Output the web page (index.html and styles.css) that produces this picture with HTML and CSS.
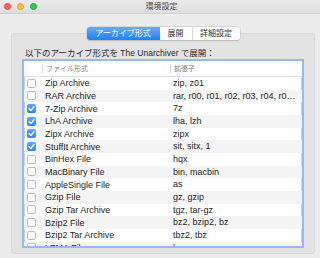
FILE: index.html
```html
<!DOCTYPE html>
<html lang="ja">
<head>
    <meta charset="UTF-8">
    <meta name="viewport" content="width=device-width, initial-scale=1.0">
    <title>環境設定</title>
    <link rel="stylesheet" href="styles.css">
</head>
<body>
    <div class="titlebar">
        <div class="lights">
            <span class="light red"></span>
            <span class="light yellow"></span>
            <span class="light green"></span>
        </div>
        <div class="title">環境設定</div>
    </div>

    <div class="content">
        <div class="tabs">
            <div class="tab tab-formats selected">アーカイブ形式</div>
            <div class="tab tab-extract">展開</div>
            <div class="tab tab-advanced">詳細設定</div>
        </div>

        <div class="group">
            <div class="label">以下のアーカイブ形式を The Unarchiver で展開：</div>

            <div class="table">
                <div class="row header">
                    <div class="cell"></div>
                    <div class="cell head">ファイル形式</div>
                    <div class="cell head">拡張子</div>
                </div>

                <div class="row">
                    <div class="cell"><span class="check"></span></div>
                    <div class="cell name">Zip Archive</div>
                    <div class="cell ext">zip, z01</div>
                </div>
                <div class="row">
                    <div class="cell"><span class="check"></span></div>
                    <div class="cell name">RAR Archive</div>
                    <div class="cell ext">rar, r00, r01, r02, r03, r04, r05, r06, r07</div>
                </div>
                <div class="row">
                    <div class="cell"><span class="check on"><svg viewBox="0 0 9 9"><path d="M2.1 4.7 L3.9 6.6 L7 2.5"/></svg></span></div>
                    <div class="cell name">7-Zip Archive</div>
                    <div class="cell ext">7z</div>
                </div>
                <div class="row">
                    <div class="cell"><span class="check on"><svg viewBox="0 0 9 9"><path d="M2.1 4.7 L3.9 6.6 L7 2.5"/></svg></span></div>
                    <div class="cell name">LhA Archive</div>
                    <div class="cell ext">lha, lzh</div>
                </div>
                <div class="row">
                    <div class="cell"><span class="check on"><svg viewBox="0 0 9 9"><path d="M2.1 4.7 L3.9 6.6 L7 2.5"/></svg></span></div>
                    <div class="cell name">Zipx Archive</div>
                    <div class="cell ext">zipx</div>
                </div>
                <div class="row">
                    <div class="cell"><span class="check on"><svg viewBox="0 0 9 9"><path d="M2.1 4.7 L3.9 6.6 L7 2.5"/></svg></span></div>
                    <div class="cell name">StuffIt Archive</div>
                    <div class="cell ext">sit, sitx, 1</div>
                </div>
                <div class="row">
                    <div class="cell"><span class="check"></span></div>
                    <div class="cell name">BinHex File</div>
                    <div class="cell ext">hqx</div>
                </div>
                <div class="row">
                    <div class="cell"><span class="check"></span></div>
                    <div class="cell name">MacBinary File</div>
                    <div class="cell ext">bin, macbin</div>
                </div>
                <div class="row">
                    <div class="cell"><span class="check"></span></div>
                    <div class="cell name">AppleSingle File</div>
                    <div class="cell ext">as</div>
                </div>
                <div class="row">
                    <div class="cell"><span class="check"></span></div>
                    <div class="cell name">Gzip File</div>
                    <div class="cell ext">gz, gzip</div>
                </div>
                <div class="row">
                    <div class="cell"><span class="check"></span></div>
                    <div class="cell name">Gzip Tar Archive</div>
                    <div class="cell ext">tgz, tar-gz</div>
                </div>
                <div class="row">
                    <div class="cell"><span class="check"></span></div>
                    <div class="cell name">Bzip2 File</div>
                    <div class="cell ext">bz2, bzip2, bz</div>
                </div>
                <div class="row">
                    <div class="cell"><span class="check"></span></div>
                    <div class="cell name">Bzip2 Tar Archive</div>
                    <div class="cell ext">tbz2, tbz</div>
                </div>
                <div class="row">
                    <div class="cell"><span class="check"></span></div>
                    <div class="cell name">LZMA File</div>
                    <div class="cell ext">lzma</div>
                </div>
            </div>
        </div>
    </div>
</body>
</html>
```

FILE: styles.css
```css
body {
    margin: 0;
    background-color: #ececec;
    font-family: "Liberation Sans", "Noto Sans CJK JP", sans-serif;
    color: #262626;
    width: 320px;
    height: 258px;
    overflow: hidden;
}

/* Title bar */
.titlebar {
    position: relative;
    height: 13px;
    background: linear-gradient(#ebebeb, #dedede);
    border-bottom: 1px solid #d2d2d2;
    display: flex;
    align-items: center;
    justify-content: center;
}

.lights {
    position: absolute;
    left: 4px;
    top: 3px;
    display: flex;
    gap: 6px;
}

.light {
    width: 7px;
    height: 7px;
    border-radius: 50%;
    box-sizing: border-box;
}

.red {
    background-color: #fc605b;
    border: 0.5px solid #de4a44;
}

.yellow {
    background-color: #fdbc40;
    border: 0.5px solid #dea034;
}

.green {
    background-color: #34c84a;
    border: 0.5px solid #27aa35;
}

.title {
    font-size: 8px;
    line-height: 10px;
    color: #4d4d4d;
    margin-left: 3px;
}

/* Content */
.content {
    padding: 13px 5px 0 11px;
}

.tabs {
    position: relative;
    z-index: 1;
    display: flex;
    width: 153px;
    height: 13px;
    margin: 0 auto -7px;
    background-color: #ffffff;
    border-radius: 3px;
    box-shadow: 0 0 0 0.5px #c4c4c4, 0 0.5px 1px rgba(0, 0, 0, 0.2);
    font-size: 8px;
    line-height: 13px;
}

.tab {
    text-align: center;
    color: #333333;
    box-sizing: border-box;
}

.tab-formats {
    width: 73px;
}

.tab-extract {
    width: 32px;
}

.tab-advanced {
    width: 48px;
    border-left: 1px solid #d6d6d6;
}

.tab.selected {
    background: linear-gradient(#63adfb, #1f7ff4);
    color: #ffffff;
    border-radius: 3px 0 0 3px;
}

.group {
    background-color: #e3e3e3;
    border: 1px solid #d9d9d9;
    border-radius: 3px;
    padding: 14px 10px 5px 10px;
}

.label {
    font-size: 8.5px;
    line-height: 11px;
    margin: 0 0 0 3px;
    color: #2a2a2a;
}

/* Table */
.table {
    height: 185px;
    overflow: hidden;
    background-color: #ffffff;
    border: 2px solid #92bbf2;
    box-shadow: inset 0 0 0 0.5px #7ea9e6;
}

.row {
    display: grid;
    grid-template-columns: 18px 128px 1fr;
    height: 12.667px;
    align-items: center;
}

.row:nth-child(odd) {
    background-color: #f4f4f4;
}

.row.header {
    height: 15px;
    background-color: #ffffff;
    border-bottom: 1px solid #e1e1e1;
}

.cell {
    display: flex;
    align-items: center;
    height: 100%;
    min-width: 0;
}

.head {
    height: 9px;
    border-left: 1px solid #d9d9d9;
    padding-left: 3px;
    font-size: 7px;
    line-height: 9px;
    color: #7b7b7b;
}

.name,
.ext {
    font-size: 9px;
    padding-left: 3px;
    white-space: nowrap;
}

.ext {
    display: block;
    line-height: 12.667px;
    overflow: hidden;
    text-overflow: ellipsis;
    padding-right: 6px;
}

.name {
    padding-left: 3px;
}

.check {
    width: 9px;
    height: 9px;
    margin-left: 3px;
    box-sizing: border-box;
    border: 0.5px solid #bdbdbd;
    border-radius: 2px;
    background-color: #ffffff;
    display: flex;
}

.check.on {
    border: none;
    background: linear-gradient(#5aa9fb, #2a85f5);
}

.check svg {
    width: 9px;
    height: 9px;
}

.check path {
    fill: none;
    stroke: #ffffff;
    stroke-width: 1.3;
    stroke-linecap: round;
    stroke-linejoin: round;
}
```
